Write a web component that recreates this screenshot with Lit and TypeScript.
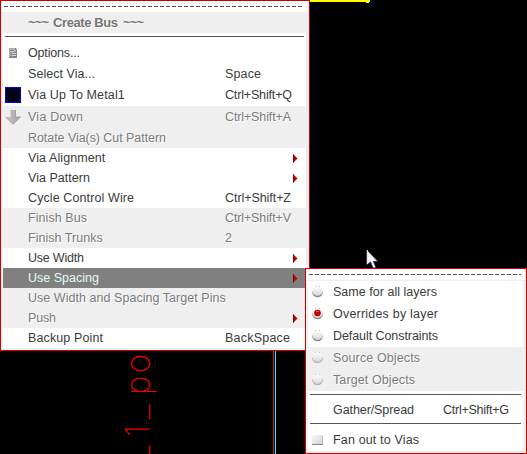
import { LitElement, html, css, svg, nothing } from "lit";
import { customElement, property } from "lit/decorators.js";
import { classMap } from "lit/directives/class-map.js";
import { styleMap } from "lit/directives/style-map.js";

type Item = {
  text?: string;
  w?: number;
  key?: string;
  keyW?: number;
  icon?: string;
  off?: boolean;
  tall?: boolean;
  sub?: boolean;
  hot?: boolean;
  title?: boolean;
  sep?: boolean;
};

const ctx = document.createElement("canvas").getContext("2d")!;

/* Letter spacing that makes a label span the given width. */
function tracking(text: string, width: number, bold = false): string {
  ctx.font = bold ? 'bold 13px "Liberation Sans"' : '12.5px "Liberation Sans"';
  return `${((width - ctx.measureText(text).width) / (text.length - 1 || 1)).toFixed(3)}px`;
}

const label = (text: string, width: number, cls: string, bold = false) =>
  html`<span class=${cls} style=${styleMap({ letterSpacing: tracking(text, width, bold) })}>${text}</span>`;

const icons: Record<string, unknown> = {
  form: html`<svg width="16" height="16" viewBox="0 0 16 16" shape-rendering="crispEdges">
    <path d="M4 3h6l2 2v7H4z" fill="#b4b4b4"/><path d="M4 3h6v1H4zM4 3h1v9H4z" fill="#aaa"/>
    <path d="M11 5h1v8H4v-1h7z" fill="#888"/><path d="M10 3v2h2z" fill="#888"/>
    <path d="M5 5h4v1H5zM5 7h2v1H5zM8 7h3v1H8zM5 9h2v1H5zM8 9h3v1H8zM5 11h2v1H5zM8 11h3v1H8z" fill="#7c7c7c"/>
    <path d="M5 6h4v1H5zM8 8h3v1H8zM8 10h3v1H8z" fill="#ddd"/>
  </svg>`,
  metal: html`<svg width="16" height="16" viewBox="0 0 16 16" shape-rendering="crispEdges">
    <defs><pattern id="dots" width="4" height="4" patternUnits="userSpaceOnUse">
      <path d="M2 1h1v1H2zM0 3h1v1H0z" fill="#0000b4"/></pattern></defs>
    <path d="M0 0h16v16H0z" fill="#00f"/><path d="M1 1h14v14H1z"/><path d="M1 1h14v14H1z" fill="url(#dots)"/>
  </svg>`,
  down: html`<svg width="16" height="16" viewBox="0 0 16 16">
    <defs><linearGradient id="dg"><stop stop-color="#c8c8c8"/><stop offset="1" stop-color="#a2a2a2"/></linearGradient></defs>
    <path d="M5.5 1h5v7h5L8 15.300.5 8h5z" fill="url(#dg)"/>
    <path d="M10.500 1v7h5L8 15.300.5 8" fill="none" stroke="#989898" stroke-width=".8"/>
  </svg>`,
  check: html`<svg width="12" height="12" viewBox="0 0 12 12" shape-rendering="crispEdges">
    <defs><linearGradient id="cg" x2="1" y2="1"><stop stop-color="#fafafa"/><stop offset="1" stop-color="#cfcfcf"/></linearGradient></defs>
    <path d="M0 1h11v10H0z" fill="url(#cg)"/><path d="M0 10h11v1H0z" fill="#858585"/><path d="M10 2h1v8h-1z" fill="#bbb"/>
  </svg>`,
};

const radio = (on: boolean, off: boolean) => html`<svg width="12" height="12" viewBox="0 0 12 12">
  <defs><linearGradient id="rg" x2="0" y2="1"><stop offset=".2" stop-color="#f8f8f8"/><stop offset="1" stop-color="#d0d0d0"/></linearGradient></defs>
  <circle cx="5.5" cy="5.5" r="5.5" fill="url(#rg)"/>
  <path d="M.2 5.500a5.300 5.300 0 0 0 10.600 0" fill="none" stroke=${off ? "#c0c0c0" : "#b0b0b0"} stroke-width="1"/>
  <path d="M1.500 8.500a5 5 0 0 0 8 0" fill="none" stroke=${off ? "#b4b4b4" : "#808080"} stroke-width="1.200"/>
  <path d="M3 .5h1M7 .5h1" stroke="#c4c4c4"/>
  ${on ? svg`<circle cx="5.500" cy="5" r="3.300" fill="#c40000"/><path d="M4 3.500h3" stroke="#e45050"/>` : nothing}
</svg>`;

@customElement("popup-menu")
class PopupMenu extends LitElement {
  @property({ attribute: false }) items: Item[] = [];

  static styles = css`
    :host {
      display: flex;
      flex-direction: column;
      box-sizing: border-box;
      border: 1px solid #d00000;
      background: #efefef;
      font: 12.5px/20px "Liberation Sans", Arial, sans-serif;
      color: #3b3b3b;
    }
    .tear {
      flex: none;
      height: 11px;
      margin: 0 1px;
      padding: 5px 4px 0 2px;
      box-sizing: border-box;
      background: #fff;
    }
    .dash {
      height: 1px;
      background: repeating-linear-gradient(90deg, #555 0 4px, transparent 4px 6px);
    }
    .list {
      padding: var(--top, 0) 3px 0 2px;
    }
    .row {
      display: grid;
      grid-template-columns: 25px var(--key-col) 1fr 13px;
      height: 20px;
      background: #fff;
      white-space: pre;
      align-items: center;
    }
    .tall { height: 22px; line-height: 22px; }
    .off { background: #efefef; color: #7b7b7b; text-shadow: 1px 1px #fff; }
    .hot { background: #808080; color: #e6fbf6; }
    .title {
      display: flex;
      height: 21px;
      font-size: 13px;
      font-weight: bold;
      background: #efefef;
      color: #767676;
      text-shadow: 1px 1px #fff;
      margin: 0 -3px 0 -2px;
      padding-left: 27px;
      gap: 4px;
    }
    .wave { width: 21px; }
    .name { width: 66px; }
    .sep {
      height: 9px;
      padding: 3px 2px 0;
      box-sizing: border-box;
      background: #fff;
    }
    .rule { height: 1px; background: #555; }
    .icon { display: flex; padding-left: var(--icon-pad, 2px); }
    svg { display: block; }
  `;

  private row(i: Item) {
    if (i.sep) return html`<div class="sep"><div class="rule"></div></div>`;
    if (i.title)
      return html`<div class="row title">
        ${label("~~~", 21, "wave", true)}${label(i.text!, i.w!, "name", true)}${label("~~~", 21, "wave", true)}
      </div>`;
    const icon = i.icon?.startsWith("radio") ? radio(i.icon === "radio-on", !!i.off) : icons[i.icon ?? ""];
    return html`<div class=${classMap({ row: true, off: !!i.off, tall: !!i.tall, hot: !!i.hot })}>
      <span class="icon">${icon ?? nothing}</span>
      ${label(i.text!, i.w!, "text")}
      ${i.key ? label(i.key, i.keyW!, "key") : html`<span></span>`}
      ${i.sub
        ? html`<svg width="6" height="9" viewBox="0 0 6 9"><path d="M0 0 4.500 4.500 0 9z" fill="#c80000"/><path d="M.5.5v8" stroke="#700"/></svg>`
        : nothing}
    </div>`;
  }

  render() {
    return html`<div class="tear"><div class="dash"></div></div>
      <div class="list">${this.items.map((i) => this.row(i))}</div>`;
  }
}

const mainItems: Item[] = [
  { text: "Create Bus", w: 65, title: true },
  { sep: true },
  { text: "Options...", w: 52, icon: "form", tall: true },
  { text: "Select Via...", w: 67, key: "Space", keyW: 36 },
  { text: "Via Up To Metal1", w: 97, key: "Ctrl+Shift+Q", keyW: 67, icon: "metal", tall: true },
  { text: "Via Down", w: 55, key: "Ctrl+Shift+A", keyW: 66, icon: "down", tall: true, off: true },
  { text: "Rotate Via(s) Cut Pattern", w: 138, off: true },
  { text: "Via Alignment", w: 78, sub: true },
  { text: "Via Pattern", w: 62, sub: true },
  { text: "Cycle Control Wire", w: 106, key: "Ctrl+Shift+Z", keyW: 66 },
  { text: "Finish Bus", w: 59, key: "Ctrl+Shift+V", keyW: 66, off: true },
  { text: "Finish Trunks", w: 75, key: "2", keyW: 7, off: true },
  { text: "Use Width", w: 56, sub: true },
  { text: "Use Spacing", w: 71, sub: true, hot: true },
  { text: "Use Width and Spacing Target Pins", w: 198, off: true },
  { text: "Push", w: 28, sub: true, off: true },
  { text: "Backup Point", w: 75, key: "BackSpace", keyW: 65 },
];

const subItems: Item[] = [
  { text: "Same for all layers", w: 104, icon: "radio", tall: true },
  { text: "Overrides by layer", w: 105, icon: "radio-on", tall: true },
  { text: "Default Constraints", w: 105, icon: "radio", tall: true },
  { text: "Source Objects", w: 87, icon: "radio", tall: true, off: true },
  { text: "Target Objects", w: 82, icon: "radio", tall: true, off: true },
  { sep: true },
  { text: "Gather/Spread", w: 81, key: "Ctrl+Shift+G", keyW: 66 },
  { sep: true },
  { text: "Fan out to Vias", w: 86, icon: "check", tall: true },
];

@customElement("app-root")
class AppRoot extends LitElement {
  static styles = css`
    :host {
      display: block;
      position: relative;
      width: 527px;
      height: 454px;
      overflow: hidden;
      background: #000;
    }
    .canvas { position: absolute; inset: 0; }
    .net { font: 100 33px Inter, Roboto, sans-serif; fill: #f00; stroke: #f00; stroke-width: 0.3; }
    .main {
      position: absolute;
      left: 0;
      top: 0;
      width: 310px;
      height: 351px;
      --key-col: 197px;
    }
    .sub {
      position: absolute;
      left: 305px;
      top: 268px;
      width: 222px;
      height: 186px;
      --key-col: 110px;
      --top: 1px;
      --icon-pad: 4px;
    }
    .cursor { position: absolute; left: 366px; top: 249px; }
  `;

  render() {
    return html`
      <svg class="canvas" width="527" height="454" viewBox="0 0 527 454">
        <path d="M310 0h60v2h-60z" fill="#ff0"/><path d="M366 2h3v1h-3z" fill="#ff0"/>
        <path d="M273 351h1v103h-1z" fill="#e01010"/><path d="M275 351h1v103h-1z" fill="#0ff"/>
        <text class="net" transform="translate(149 454) rotate(-90)" x="-6 17 35 59 81">_1_po</text>
      </svg>
      <popup-menu class="main" .items=${mainItems}></popup-menu>
      <popup-menu class="sub" .items=${subItems}></popup-menu>
      <svg class="cursor" width="13" height="20" viewBox="0 0 13 20">
        <path d="M1 1v15l3.500-3 2.500 6h3L7.500 12.500H12z" fill="#f4f4ff" stroke="#223" stroke-width=".8"/>
        <path d="M1.300 1v14" stroke="#fff"/>
      </svg>`;
  }
}
